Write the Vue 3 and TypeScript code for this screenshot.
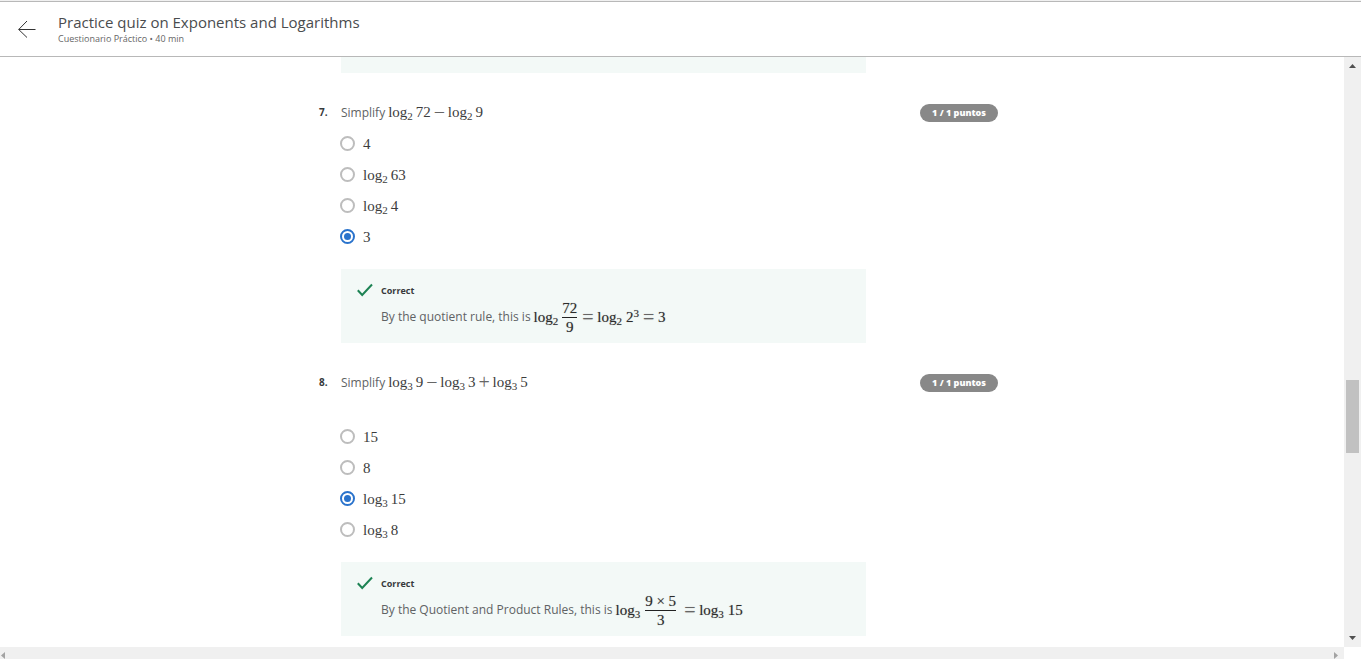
<script setup lang="ts">
import { ref } from 'vue'

type Token =
  | { kind: 'log'; base: string }
  | { kind: 'num'; value: string; sup?: string }
  | { kind: 'op'; value: string }
  | { kind: 'frac'; top: string; bottom: string; wide?: boolean }

interface Question {
  id: number
  prompt: Token[]
  spaced: boolean
  options: Token[][]
  feedbackText: string
  feedbackMath: Token[]
}

const log = (base: string): Token => ({ kind: 'log', base })
const num = (value: string, sup?: string): Token => ({ kind: 'num', value, sup })
const op = (value: string): Token => ({ kind: 'op', value })

const questions: Question[] = [
  {
    id: 7,
    prompt: [log('2'), num('72'), op('−'), log('2'), num('9')],
    spaced: false,
    options: [[num('4')], [log('2'), num('63')], [log('2'), num('4')], [num('3')]],
    feedbackText: 'By the quotient rule, this is',
    feedbackMath: [
      log('2'),
      { kind: 'frac', top: '72', bottom: '9' },
      op('='),
      log('2'),
      num('2', '3'),
      op('='),
      num('3'),
    ],
  },
  {
    id: 8,
    prompt: [log('3'), num('9'), op('−'), log('3'), num('3'), op('+'), log('3'), num('5')],
    spaced: true,
    options: [[num('15')], [num('8')], [log('3'), num('15')], [log('3'), num('8')]],
    feedbackText: 'By the Quotient and Product Rules, this is',
    feedbackMath: [
      log('3'),
      { kind: 'frac', top: '9 × 5', bottom: '3', wide: true },
      op('='),
      log('3'),
      num('15'),
    ],
  },
]

const answers = ref<Record<number, number>>({ 7: 3, 8: 2 })
</script>

<template>
  <div class="page">
    <header class="topbar">
      <button class="back" type="button" aria-label="Back">
        <svg width="18" height="18" viewBox="0 0 18 18" fill="none" stroke="#333" stroke-width="1">
          <path d="M0.7 9.5H17.5M9 1L0.7 9.5L9 17.5" />
        </svg>
      </button>
      <div class="heading">
        <h1>Practice quiz on Exponents and Logarithms</h1>
        <p>Cuestionario Práctico • 40 min</p>
      </div>
    </header>

    <div class="viewport">
      <main class="content">
        <div class="quiz">
          <div class="previous"></div>

          <section v-for="q in questions" :key="q.id" class="question">
            <div class="number">{{ q.id }}.</div>
            <div class="prompt" :id="`prompt-${q.id}`">
              <span class="words">Simplify</span>
              <span class="math">
                <template v-for="(t, i) in q.prompt" :key="i">
                  <span v-if="t.kind === 'log'" class="log">log<sub>{{ t.base }}</sub></span>
                  <span v-else-if="t.kind === 'num'">{{ t.value }}</span>
                  <span v-else-if="t.kind === 'op'" class="op">{{ t.value }}</span>
                </template>
              </span>
            </div>
            <div class="score"><span class="pill">1 / 1 puntos</span></div>

            <div
              class="options"
              :class="{ spaced: q.spaced }"
              role="radiogroup"
              :aria-labelledby="`prompt-${q.id}`"
            >
              <label v-for="(option, n) in q.options" :key="n" class="option">
                <input v-model="answers[q.id]" type="radio" :name="`question-${q.id}`" :value="n" />
                <span class="math">
                  <template v-for="(t, i) in option" :key="i">
                    <span v-if="t.kind === 'log'" class="log">log<sub>{{ t.base }}</sub></span>
                    <span v-else-if="t.kind === 'num'">{{ t.value }}</span>
                  </template>
                </span>
              </label>
            </div>

            <div class="feedback">
              <svg class="tick" width="16" height="14" viewBox="0 0 16 14" fill="none" stroke="#1d8354" stroke-width="2">
                <path d="M0.8 7.2L5.2 12L15 1.5" />
              </svg>
              <div>
                <h2>Correct</h2>
                <div class="explanation">
                  <span class="words">{{ q.feedbackText }}</span>
                  <span class="math strong">
                    <template v-for="(t, i) in q.feedbackMath" :key="i">
                      <span v-if="t.kind === 'log'" class="log">log<sub>{{ t.base }}</sub></span>
                      <span v-else-if="t.kind === 'num'">{{ t.value }}<sup v-if="t.sup">{{ t.sup }}</sup></span>
                      <span v-else-if="t.kind === 'op'" class="op">{{ t.value }}</span>
                      <span v-else class="frac" :class="{ wide: t.wide }">
                        <span class="top">{{ t.top }}</span>
                        <span class="bottom">{{ t.bottom }}</span>
                      </span>
                    </template>
                  </span>
                </div>
              </div>
            </div>
          </section>
        </div>
      </main>

      <div class="vscroll" aria-hidden="true">
        <svg width="17" height="17" viewBox="0 0 17 17"><path d="M5 11L8.5 7L12 11Z" fill="#505050" /></svg>
        <div class="before"></div>
        <div class="thumb"></div>
        <div class="after"></div>
        <svg width="17" height="17" viewBox="0 0 17 17"><path d="M5 6L8.5 10L12 6Z" fill="#505050" /></svg>
      </div>

      <div class="hscroll" aria-hidden="true">
        <svg width="17" height="12" viewBox="0 0 17 12"><path d="M5 5V12L1 8.500Z" fill="#a3a3a3" /></svg>
        <svg width="17" height="12" viewBox="0 0 17 12"><path d="M7 5V12L11 8.500Z" fill="#a3a3a3" /></svg>
      </div>
    </div>
  </div>
</template>

<style>
body {
  margin: 0;
  background: #fff;
}
</style>

<style scoped>
.page {
  box-sizing: border-box;
  display: flex;
  flex-direction: column;
  height: 100vh;
  padding-right: 5px;
  overflow: hidden;
  background: #fff;
  color: #373a3c;
  font-family: "Open Sans", "Noto Sans", sans-serif;
}

h1,
h2,
p {
  margin: 0;
  font-weight: 400;
}

.topbar {
  flex: none;
  display: flex;
  align-items: center;
  gap: 22px;
  height: 54px;
  margin-top: 1px;
  padding-left: 18px;
  border-top: 1px solid #b8b8b8;
  border-bottom: 1px solid #b8b8b8;
  box-shadow: 0 -1px #f0f0f0;
}

.back {
  display: flex;
  padding: 0;
  border: 0;
  background: none;
  cursor: pointer;
}

h1 {
  font-size: 15px;
  line-height: 20px;
  color: #4a4c4e;
}

.heading p {
  font-size: 9px;
  line-height: 14px;
  color: #666;
}

.viewport {
  flex: 1;
  min-height: 0;
  display: grid;
  grid-template-columns: 1fr 17px;
  grid-template-rows: minmax(0, 1fr) 12px;
}

.content {
  overflow: hidden;
}

.quiz {
  max-width: 706px;
  margin: 0 auto;
}

.previous {
  height: 16px;
  margin: 0 159px 0 22px;
  background: #f3f9f7;
}

.question {
  display: grid;
  grid-template-columns: 22px 1fr 159px;
  margin-top: 30px;
}

.number {
  font-size: 10px;
  font-weight: 700;
  line-height: 18px;
}

.prompt,
.explanation {
  display: flex;
  align-items: center;
  gap: 3px;
}

.prompt {
  height: 20px;
}

.prompt .math {
  padding-bottom: 2px;
}

.words {
  font-size: 12px;
  line-height: 18px;
  color: #606264;
}

.score {
  padding: 1px 27px 0 0;
  text-align: right;
  line-height: 0;
}

.pill {
  display: inline-block;
  padding: 0 12px;
  border-radius: 9px;
  background: #888;
  color: #fff;
  font-size: 9px;
  font-weight: 800;
  line-height: 18px;
}

.options {
  grid-column: 2;
  display: flex;
  flex-direction: column;
  margin-left: -1px;
  padding: 5px 0 17px;
}

.options.spaced {
  padding-top: 28px;
}

.option {
  display: flex;
  align-items: center;
  gap: 8px;
  height: 31px;
}

.option input {
  appearance: none;
  display: grid;
  place-items: center;
  box-sizing: border-box;
  width: 15px;
  height: 15px;
  margin: 0;
  border: 2px solid #bdbdbd;
  border-radius: 50%;
  background: #fff;
}

.option input:checked {
  border-color: #2a73cc;
}

.option input:checked::before {
  content: "";
  width: 7px;
  height: 7px;
  border-radius: 50%;
  background: #2a73cc;
}

.math {
  display: inline-flex;
  align-items: center;
  gap: 3px;
  font-family: "Liberation Serif", serif;
  font-size: 15px;
  line-height: 18px;
  color: #3c3c3c;
}

.math sub,
.math sup {
  font-size: 11px;
  line-height: 0;
}

.math sub {
  vertical-align: -3px;
}

.math sup {
  vertical-align: 5px;
}

.op {
  width: 11px;
  font-size: 20px;
  text-align: center;
  color: #666;
}

.strong {
  gap: 4px;
  color: #2c2c2c;
  text-shadow: 0 0 1px #aaa;
}

.frac {
  display: inline-flex;
  flex-direction: column;
  align-items: center;
  margin-right: 1px;
}

.frac.wide {
  margin: 0 4px 0 1px;
}

.frac .top {
  align-self: stretch;
  border-bottom: 1px solid #222;
  text-align: center;
}

.feedback {
  grid-column: 2;
  display: grid;
  grid-template-columns: 16px 1fr;
  gap: 8px;
  padding: 14px 16px 8px;
  background: #f3f9f7;
}

h2 {
  font-size: 9px;
  font-weight: 700;
  line-height: 16px;
}

.explanation {
  height: 36px;
}

.vscroll {
  display: flex;
  flex-direction: column;
  background: #f0f0f0;
}

.vscroll svg {
  flex: none;
}

.before {
  flex: 306;
}

.thumb {
  flex: 73;
  margin: 0 2px;
  background: #c1c1c1;
}

.after {
  flex: 177;
}

.hscroll {
  display: flex;
  justify-content: space-between;
  background: #f0f0f0;
}
</style>
